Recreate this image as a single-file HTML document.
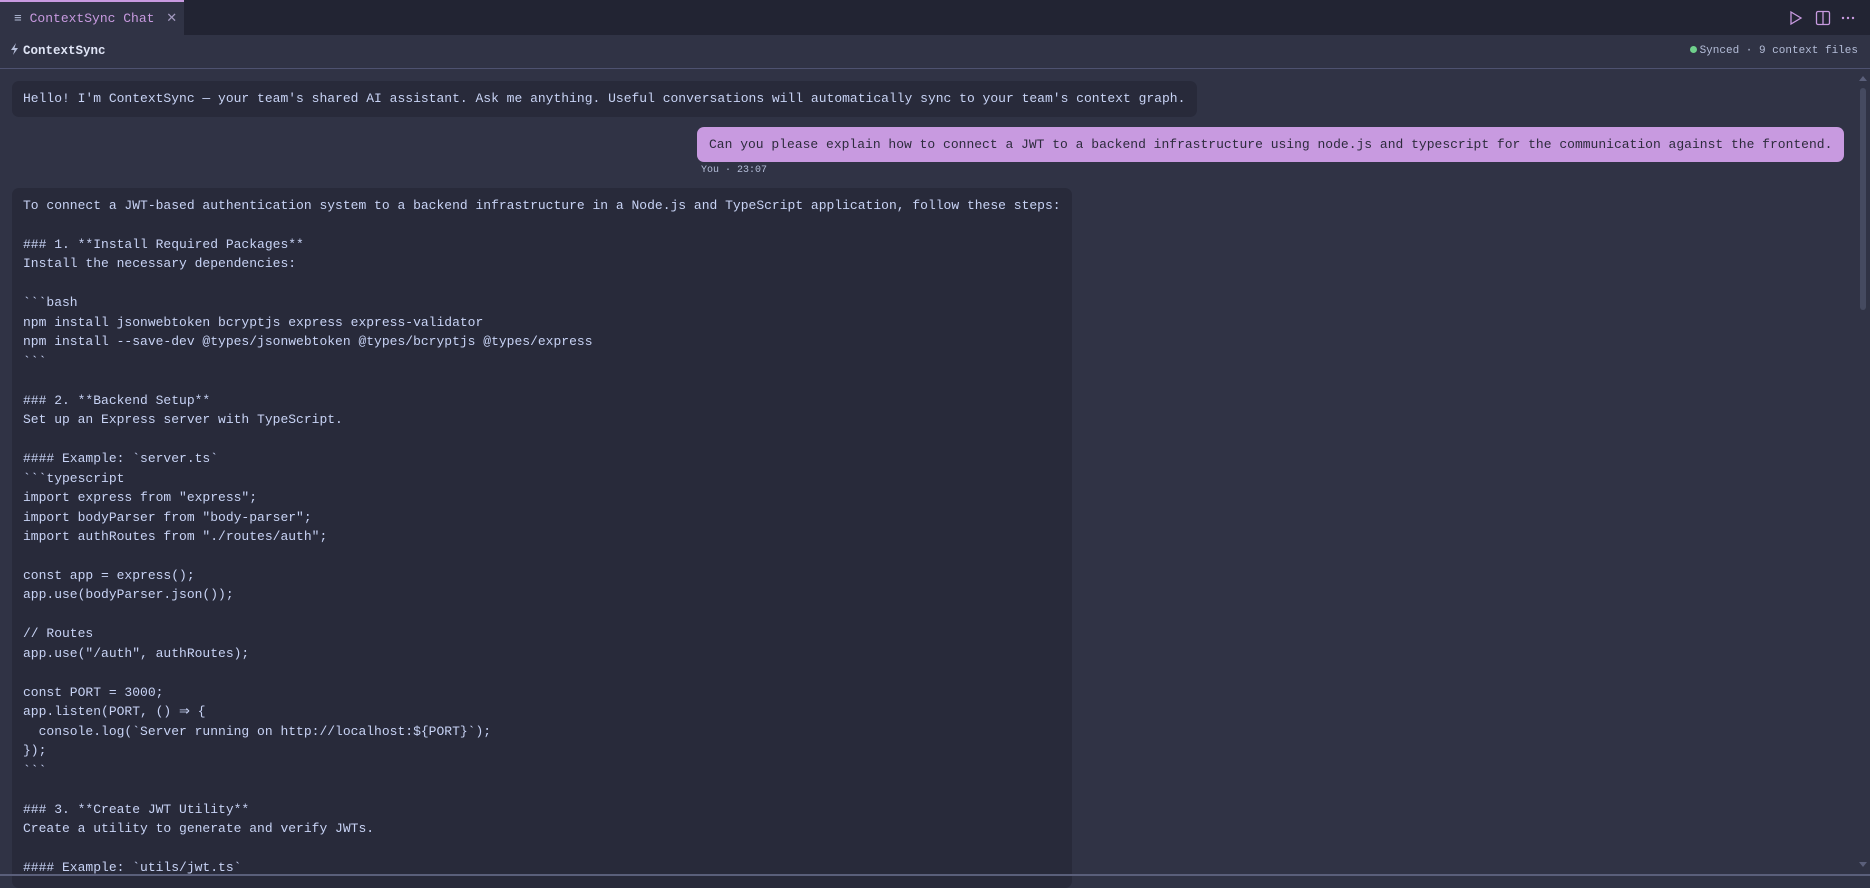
<!DOCTYPE html>
<html><head><meta charset="utf-8"><style>
*{margin:0;padding:0;box-sizing:border-box}
html,body{width:1870px;height:877px;overflow:hidden;background:#303345;font-family:"Liberation Mono",monospace;color:#c8d3f5}
.tabbar{position:absolute;left:0;top:0;width:1870px;height:35px;background:#222433}
.tab{position:absolute;left:0;top:0;width:184px;height:35px;background:#303345;border-top:2px solid #c89ae0;color:#c89ae0;font-size:13px;line-height:33px;padding-left:14px}
.tab .x{color:#a39ac0;margin-left:4px}
.hdr{position:absolute;left:0;top:35px;width:1870px;height:34px;border-bottom:1px solid #4e5270;font-size:12.5px;font-weight:bold;color:#dfe4f5;line-height:33px;padding-left:10px}
.sync{position:absolute;right:12px;top:0;line-height:33px;font-size:11px;color:#b4bdd8;font-weight:normal}
.dot{display:inline-block;width:7px;height:7px;border-radius:50%;background:#6fd08c;margin-right:3px;vertical-align:0px}
.b1{position:absolute;left:12px;top:81px;width:1185px;height:36px;background:#282a3a;border-radius:7px;font-size:13px;line-height:36px;padding-left:11px;white-space:pre}
.b2{position:absolute;left:697px;top:127px;width:1147px;height:35px;background:#c89ae0;border-radius:7px;font-size:13px;line-height:35px;color:#2d2b3d;padding-left:12px;white-space:pre}
.you{position:absolute;left:701px;top:165px;font-size:10px;color:#b4bdd8}
.b3{position:absolute;left:12px;top:188px;width:1060px;height:700px;background:#282a3a;border-radius:7px;font-size:13px;line-height:19.47px;padding:8px 11px;white-space:pre}
.sb{position:absolute;left:1860px;top:88px;width:6px;height:222px;background:#454a60;border-radius:3px}
.bot{position:absolute;left:0;top:874px;width:1870px;height:2px;background:#5a5f7a}
</style></head><body>
<div class="tabbar">
<div class="tab"><span style="color:#b4bdd8">≡</span> ContextSync Chat <span class="x">✕</span></div>
<svg style="position:absolute;left:1788px;top:10px" width="16" height="16" viewBox="0 0 16 16"><path d="M3 2 L13 8 L3 14 Z" fill="none" stroke="#c89ae0" stroke-width="1.3"/></svg>
<svg style="position:absolute;left:1815px;top:10px" width="16" height="16" viewBox="0 0 16 16"><rect x="1.5" y="1.5" width="13" height="13" rx="1.5" fill="none" stroke="#c89ae0" stroke-width="1.3"/><line x1="8" y1="1.5" x2="8" y2="14.5" stroke="#c89ae0" stroke-width="1.3"/></svg>
<svg style="position:absolute;left:1841px;top:16px" width="14" height="4" viewBox="0 0 14 4"><circle cx="2" cy="2" r="1.2" fill="#c89ae0"/><circle cx="7" cy="2" r="1.2" fill="#c89ae0"/><circle cx="12" cy="2" r="1.2" fill="#c89ae0"/></svg>
</div>
<div class="hdr"><svg width="9" height="12" viewBox="0 0 9 12" style="vertical-align:-1px;margin-right:4px"><path d="M6 0 L1 7 L4.5 7 L3 12 L8 5 L4.5 5 Z" fill="#b4bdd8"/></svg>ContextSync<div class="sync"><span class="dot"></span>Synced · 9 context files</div></div>
<div class="b1">Hello! I'm ContextSync — your team's shared AI assistant. Ask me anything. Useful conversations will automatically sync to your team's context graph.</div>
<div class="b2">Can you please explain how to connect a JWT to a backend infrastructure using node.js and typescript for the communication against the frontend.</div>
<div class="you">You · 23:07</div>
<div class="b3">To connect a JWT-based authentication system to a backend infrastructure in a Node.js and TypeScript application, follow these steps:

### 1. **Install Required Packages**
Install the necessary dependencies:

&#96;&#96;&#96;bash
npm install jsonwebtoken bcryptjs express express-validator
npm install --save-dev @types/jsonwebtoken @types/bcryptjs @types/express
&#96;&#96;&#96;

### 2. **Backend Setup**
Set up an Express server with TypeScript.

#### Example: &#96;server.ts&#96;
&#96;&#96;&#96;typescript
import express from "express";
import bodyParser from "body-parser";
import authRoutes from "./routes/auth";

const app = express();
app.use(bodyParser.json());

// Routes
app.use("/auth", authRoutes);

const PORT = 3000;
app.listen(PORT, () ⇒ {
  console.log(&#96;Server running on http://localhost:${PORT}&#96;);
});
&#96;&#96;&#96;

### 3. **Create JWT Utility**
Create a utility to generate and verify JWTs.

#### Example: &#96;utils/jwt.ts&#96;</div>
<div class="sb"></div>
<div style="position:absolute;left:1859px;top:76px;width:0;height:0;border-left:4px solid transparent;border-right:4px solid transparent;border-bottom:5px solid #5a5f7a"></div>
<div style="position:absolute;left:1859px;top:862px;width:0;height:0;border-left:4px solid transparent;border-right:4px solid transparent;border-top:5px solid #5a5f7a"></div>
<div class="bot"></div>
</body></html>
